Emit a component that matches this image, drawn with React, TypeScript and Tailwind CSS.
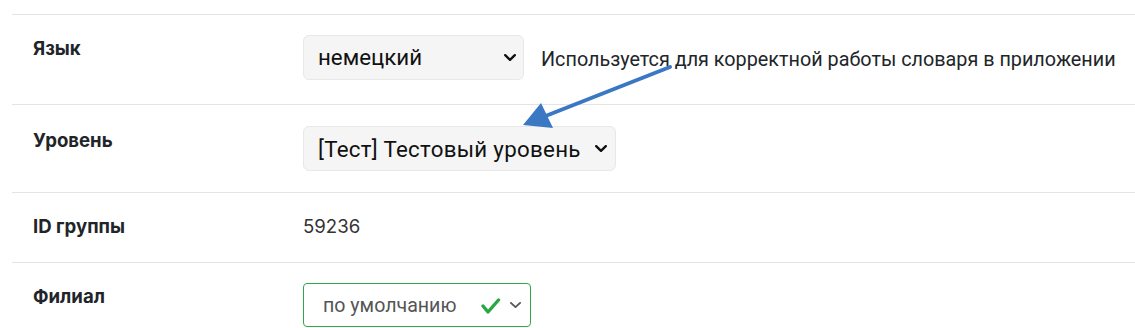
import React from "react";

const Chevron = ({ w, h, color, sw }: { w: number; h: number; color: string; sw: number }) => (
  <svg width={w} height={h} viewBox={`0 0 ${w} ${h}`} fill="none">
    <polyline
      points={`${sw / 2},${sw / 2} ${w / 2},${h - sw / 2} ${w - sw / 2},${sw / 2}`}
      stroke={color}
      strokeWidth={sw}
      strokeLinecap="round"
      strokeLinejoin="round"
    />
  </svg>
);

export default function App() {
  const label = "w-[291px] pl-[21px] shrink-0 text-[18.6px] leading-[24px] font-bold text-[#212529] [font-family:Inter,'Noto_Sans',sans-serif]";
  return (
    <div className="relative w-[1135px] h-[328px] bg-white overflow-hidden">
      <div className="pt-[14px] pl-[12px]">
        {/* Row 1 */}
        <div className="flex h-[90px] border-t border-[#e4e4e4] pt-[20px]">
          <div className={label + " mt-[1px]"}>Язык</div>
          <div className="flex items-start">
            <div className="flex items-center justify-between w-[221px] h-[45px] rounded-[6px] bg-[#f5f5f5] border border-[#e8e8e8] pl-[14px] pr-[7px] text-[22.3px] text-[#111] [font-family:Roboto,'Liberation_Sans',sans-serif]">
              <span className="pt-[1px]">немецкий</span>
              <Chevron w={12} h={7} color="#111" sw={2.4} />
            </div>
            <div className="ml-[17px] mt-[12px] text-[19.8px] leading-[26px] text-[#212529] [font-family:Roboto,'Liberation_Sans',sans-serif] whitespace-nowrap">
              Используется для корректной работы словаря в приложении
            </div>
          </div>
        </div>
        {/* Row 2 */}
        <div className="flex h-[88px] border-t border-[#e4e4e4] pt-[21px]">
          <div className={label + " mt-[2px]"}>Уровень</div>
          <div className="flex items-center justify-between w-[313px] h-[45px] rounded-[6px] bg-[#f5f5f5] border border-[#e8e8e8] pl-[14px] pr-[8px] text-[22.3px] tracking-[0.3px] text-[#111] [font-family:Roboto,'Liberation_Sans',sans-serif]">
            <span className="pt-[3px]">[Тест] Тестовый уровень</span>
            <Chevron w={12} h={7} color="#111" sw={2.4} />
          </div>
        </div>
        {/* Row 3 */}
        <div className="flex h-[70px] border-t border-[#e4e4e4] pt-[21px]">
          <div className={label}>ID группы</div>
          <div className="text-[18.6px] leading-[24px] text-[#333] [font-family:Inter,'Noto_Sans',sans-serif]">59236</div>
        </div>
        {/* Row 4 */}
        <div className="flex h-[66px] border-t border-[#e4e4e4] pt-[20px]">
          <div className={label + " mt-[1px]"}>Филиал</div>
          <div className="flex items-center w-[228px] h-[44px] rounded-[4px] bg-white border border-[#2ea84a] pl-[19px] pr-[9px] text-[19.6px] text-[#555] [font-family:Roboto,'Liberation_Sans',sans-serif]">
            <span className="flex-1 pt-[1px]">по умолчанию</span>
            <svg width="20" height="17" viewBox="0 0 20 17" fill="none" className="mr-[9px] mt-[2px]">
              <polyline points="2,8 7,14 17.5,2" stroke="#28a745" strokeWidth="3.4" strokeLinecap="round" strokeLinejoin="round" />
            </svg>
            <Chevron w={11} h={6} color="#555" sw={1.8} />
          </div>
        </div>
      </div>
      <svg className="absolute left-0 top-0 pointer-events-none" width="1135" height="328" viewBox="0 0 1135 328">
        <line x1="670" y1="67" x2="543" y2="117" stroke="#3b78c3" strokeWidth="4" strokeLinecap="round" />
        <polygon points="523,125 541,103 553,128" fill="#3b78c3" />
      </svg>
    </div>
  );
}
